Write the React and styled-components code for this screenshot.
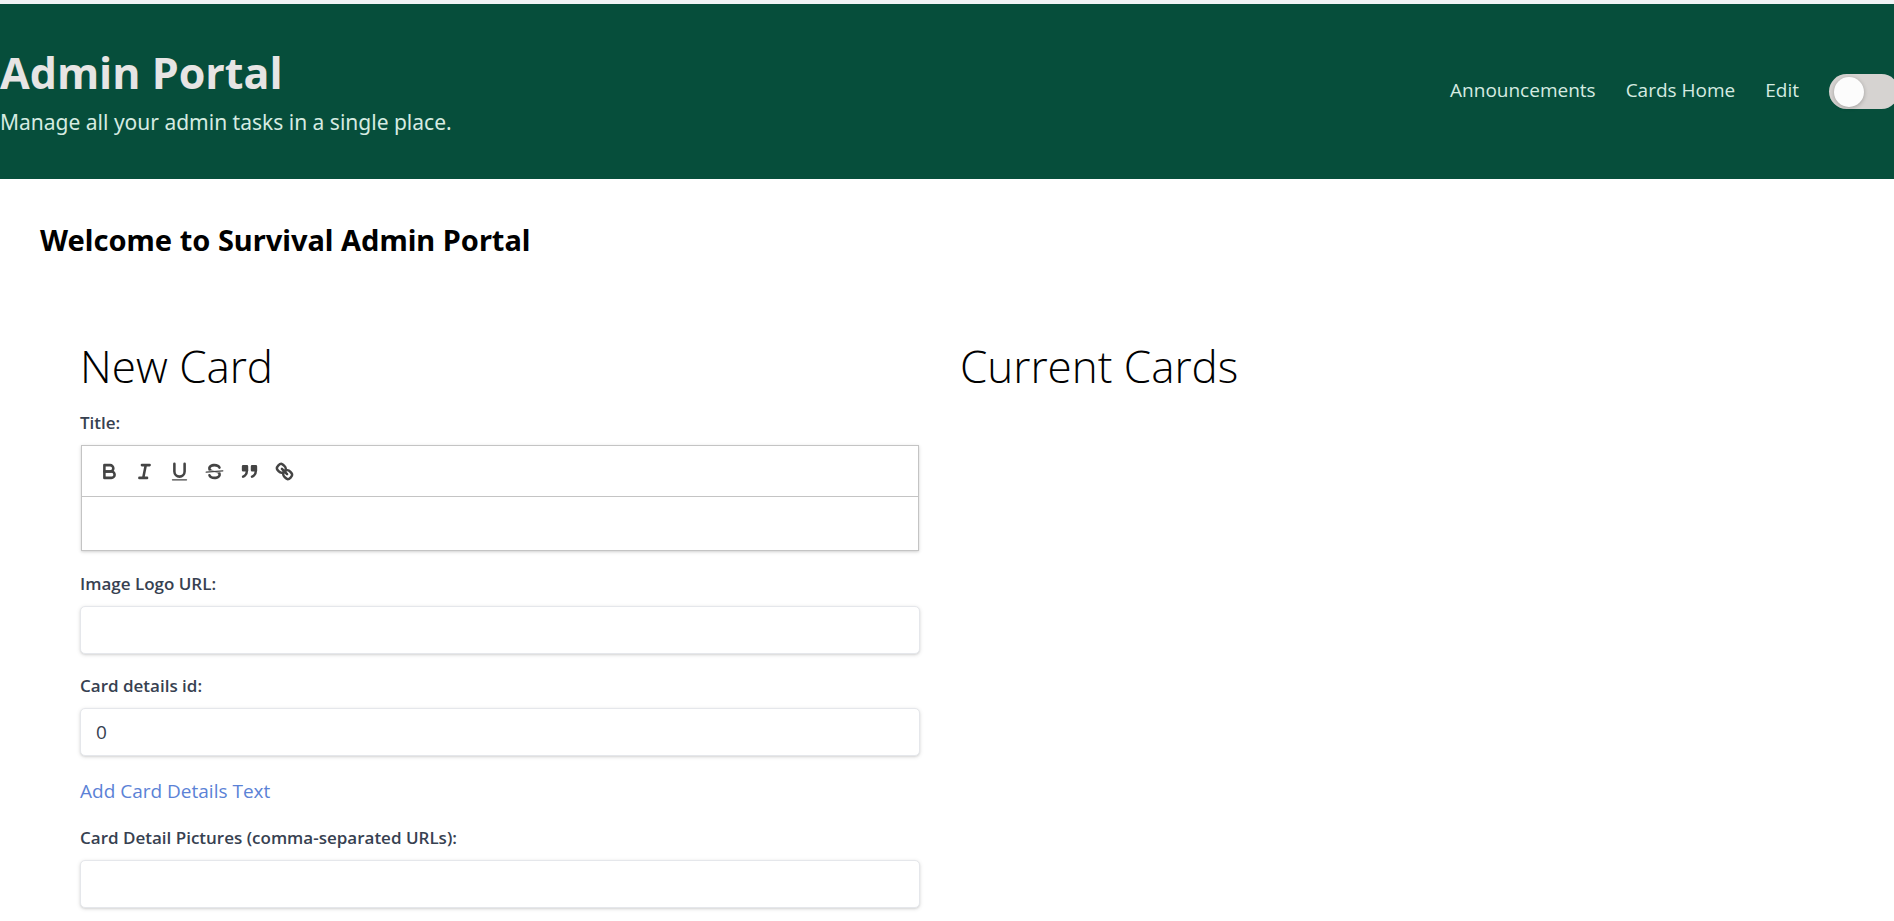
import React, { useState } from "react";
import styled, { createGlobalStyle } from "styled-components";

const GlobalStyle = createGlobalStyle`
  *, *::before, *::after { box-sizing: border-box; }
  body {
    margin: 0;
    background: #ffffff;
    color: #000000;
    font-family: "Open Sans", "Noto Sans", sans-serif;
    font-size: 19px;
    line-height: 30px;
  }
  h1, h2, h3, p { margin: 0; }
`;

const Page = styled.div`
  border-top: 4px solid #f0f4f5;
  overflow-x: hidden;
`;

const Header = styled.header`
  display: flex;
  align-items: center;
  justify-content: space-between;
  min-height: 175px;
  background: #064e3b;
`;

const Brand = styled.div`
  padding-top: 4px;
`;

const PortalTitle = styled.h1`
  color: #e7e5e4;
  font-size: 43px;
  line-height: 56px;
  font-weight: 700;
`;

const Tagline = styled.p`
  color: #d5ebe1;
  font-family: "Noto Sans", sans-serif;
  font-size: 21px;
  line-height: 42px;
`;

const Nav = styled.nav`
  display: flex;
  align-items: center;
  gap: 30px;
  margin-right: -5px;
`;

const NavLink = styled.a`
  padding-bottom: 4px;
  color: #d5ebe1;
  text-decoration: none;
`;

const Toggle = styled.input`
  appearance: none;
  display: flex;
  align-items: center;
  flex: none;
  width: 70px;
  height: 35px;
  margin: 0;
  padding: 0 5px;
  border-radius: 18px;
  background: #d6d3d1;
  cursor: pointer;

  &::before {
    content: "";
    width: 30px;
    height: 30px;
    border-radius: 50%;
    background: #fcfcfc;
    box-shadow: 0 1px 4px rgba(0, 0, 0, 0.25);
  }
  &:checked { justify-content: flex-end; }
`;

const Main = styled.main`
  padding: 40px 54px 0 40px;
`;

const Welcome = styled.h2`
  font-family: "Noto Sans", sans-serif;
  font-size: 29px;
  line-height: 42px;
  font-weight: 700;
`;

const Columns = styled.div`
  display: grid;
  grid-template-columns: 1fr 1fr;
  gap: 40px;
  padding: 80px 40px 12px;
`;

const SectionTitle = styled.h3`
  font-size: 44px;
  line-height: 50px;
  font-weight: 300;
`;

const Form = styled.form`
  display: flex;
  flex-direction: column;
  gap: 20px;
  padding-top: 20px;
`;

const Field = styled.div`
  display: flex;
  flex-direction: column;
  align-items: stretch;
  gap: 10px;
`;

const Label = styled.label`
  color: #374151;
  font-size: 17px;
  line-height: 24px;
  font-weight: 600;
`;

const TextInput = styled.input`
  width: 100%;
  height: 48px;
  padding: 0 15px;
  border: 1px solid #e5e7eb;
  border-radius: 5px;
  background: #ffffff;
  box-shadow: 0 1px 4px rgba(0, 0, 0, 0.12), 0 1px 2px rgba(0, 0, 0, 0.08);
  color: #374151;
  font: inherit;
  outline: none;
`;

const Editor = styled.div`
  border: 1px solid #c4c4c4;
  margin: 0 1px 1px;
  box-shadow: 0 1px 4px rgba(0, 0, 0, 0.12), 0 1px 2px rgba(0, 0, 0, 0.08);
`;

const Toolbar = styled.div`
  display: flex;
  padding: 10px;
  border-bottom: 1px solid #c4c4c4;
`;

const ToolButton = styled.button`
  display: flex;
  align-items: center;
  justify-content: center;
  width: 35px;
  height: 30px;
  padding: 0;
  border: 0;
  background: none;
  cursor: pointer;

  svg {
    width: 23px;
    height: 23px;
    fill: none;
    stroke: #444444;
    stroke-width: 2;
    stroke-linecap: round;
    stroke-linejoin: round;
  }
  .fill { fill: #444444; }
  .solid { fill: #444444; stroke: none; }
  .thin { stroke-width: 1; }
`;

const EditorText = styled.textarea`
  display: block;
  width: 100%;
  height: 53px;
  padding: 15px 19px;
  border: 0;
  background: none;
  color: #374151;
  font: inherit;
  font-size: 17px;
  line-height: 23px;
  outline: none;
  resize: none;
`;

const AddLink = styled.a`
  align-self: flex-start;
  color: #5b82d6;
  text-decoration: none;
`;

const tools = [
  {
    name: "Bold",
    icon: (
      <>
        <path d="M5,4H9.5A2.5,2.5,0,0,1,12,6.5v0A2.5,2.5,0,0,1,9.5,9H5A0,0,0,0,1,5,9V4A0,0,0,0,1,5,4Z" />
        <path d="M5,9h5.5A2.5,2.5,0,0,1,13,11.5v0A2.5,2.5,0,0,1,10.5,14H5a0,0,0,0,1,0,0V9A0,0,0,0,1,5,9Z" />
      </>
    ),
  },
  {
    name: "Italic",
    icon: <path d="M7 4H13M5 14H11M8 14L10 4" />,
  },
  {
    name: "Underline",
    icon: (
      <>
        <path d="M5,3V9a4.012,4.012,0,0,0,4,4H9a4.012,4.012,0,0,0,4-4V3" />
        <path className="thin" d="M3.5 15.5H14.5" />
      </>
    ),
  },
  {
    name: "Strike",
    icon: (
      <>
        <path className="thin" d="M15.5 8.5L2.5 9.5" />
        <path
          className="solid"
          d="M9.007,8C6.542,7.791,6,7.519,6,6.5,6,5.792,7.283,5,9,5c1.571,0,2.765.679,2.969,1.309a1,1,0,0,0,1.9-.617C13.356,4.106,11.354,3,9,3,6.2,3,4,4.538,4,6.5a3.2,3.2,0,0,0,.5,1.843Z"
        />
        <path
          className="solid"
          d="M8.984,10C11.457,10.208,12,10.479,12,11.5c0,0.708-1.283,1.5-3,1.5-1.571,0-2.765-.679-2.969-1.309a1,1,0,1,0-1.9.617C4.644,13.894,6.646,15,9,15c2.8,0,5-1.538,5-3.5a3.2,3.2,0,0,0-.5-1.843Z"
        />
      </>
    ),
  },
  {
    name: "Blockquote",
    icon: (
      <>
        <rect className="fill" x="4" y="5" width="3" height="3" />
        <rect className="fill" x="11" y="5" width="3" height="3" />
        <path d="M7,8c0,4.031-3,5-3,5" />
        <path d="M14,8c0,4.031-3,5-3,5" />
      </>
    ),
  },
  {
    name: "Link",
    icon: (
      <>
        <path d="M7 7L11 11" />
        <path d="M8.9,4.577a3.476,3.476,0,0,1,.36,4.679A3.476,3.476,0,0,1,4.577,8.9C3.185,7.5,2.035,6.4,4.217,4.217S7.5,3.185,8.9,4.577Z" />
        <path d="M13.423,9.1a3.476,3.476,0,0,0-4.679-.36,3.476,3.476,0,0,0,.36,4.679c1.392,1.392,2.5,2.542,4.679.36S14.815,10.5,13.423,9.1Z" />
      </>
    ),
  },
];

export default function App() {
  const [logo, setLogo] = useState("");
  const [detailsId, setDetailsId] = useState("0");
  const [pictures, setPictures] = useState("");

  return (
    <Page>
      <GlobalStyle />
      <Header>
        <Brand>
          <PortalTitle>Admin Portal</PortalTitle>
          <Tagline>Manage all your admin tasks in a single place.</Tagline>
        </Brand>
        <Nav>
          <NavLink href="#announcements">Announcements</NavLink>
          <NavLink href="#cards">Cards Home</NavLink>
          <NavLink href="#edit">Edit</NavLink>
          <Toggle type="checkbox" role="switch" aria-label="Edit mode" />
        </Nav>
      </Header>
      <Main>
        <Welcome>Welcome to Survival Admin Portal</Welcome>
        <Columns>
          <section>
            <SectionTitle>New Card</SectionTitle>
            <Form>
              <Field>
                <Label htmlFor="title">Title:</Label>
                <Editor>
                  <Toolbar>
                    {tools.map((tool) => (
                      <ToolButton key={tool.name} type="button" aria-label={tool.name}>
                        <svg viewBox="0 0 18 18">{tool.icon}</svg>
                      </ToolButton>
                    ))}
                  </Toolbar>
                  <EditorText id="title" />
                </Editor>
              </Field>
              <Field>
                <Label htmlFor="logo">Image Logo URL:</Label>
                <TextInput id="logo" value={logo} onChange={(e) => setLogo(e.target.value)} />
              </Field>
              <Field>
                <Label htmlFor="details">Card details id:</Label>
                <TextInput id="details" value={detailsId} onChange={(e) => setDetailsId(e.target.value)} />
              </Field>
              <AddLink href="#details-text">Add Card Details Text</AddLink>
              <Field>
                <Label htmlFor="pictures">Card Detail Pictures (comma-separated URLs):</Label>
                <TextInput id="pictures" value={pictures} onChange={(e) => setPictures(e.target.value)} />
              </Field>
            </Form>
          </section>
          <section>
            <SectionTitle>Current Cards</SectionTitle>
          </section>
        </Columns>
      </Main>
    </Page>
  );
}
